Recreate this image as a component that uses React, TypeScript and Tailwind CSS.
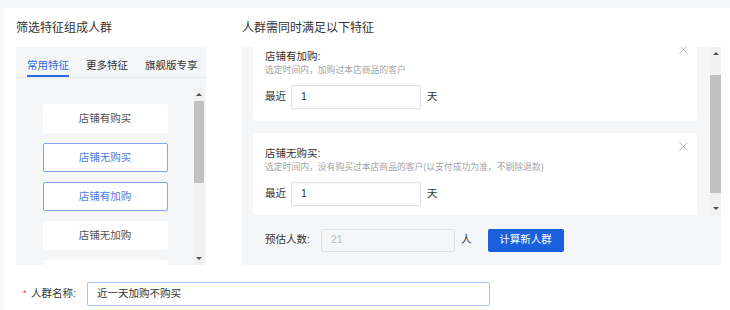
import React from 'react';

const font = { fontFamily: '"Liberation Sans", "Noto Sans CJK SC", sans-serif' };

// last one is only peeking in at the bottom of the list
const features = [
  { label: '店铺有购买', active: false },
  { label: '店铺无购买', active: true },
  { label: '店铺有加购', active: true },
  { label: '店铺无加购', active: false },
  { label: '', active: false },
];

const selected = [
  { title: '店铺有加购:', desc: '选定时间内，加购过本店商品的客户' },
  { title: '店铺无购买:', desc: '选定时间内，没有购买过本店商品的客户(以支付成功为准，不剔除退款)' },
];

// fake classic scrollbar, drawn in flow next to the list
const ScrollBar = ({ thumbTop, thumbHeight, width }: { thumbTop: string; thumbHeight: string; width: string }) => (
  <div className={`${width} h-full bg-[#f1f1f1] flex flex-col`}>
    <div className="h-[13px] flex items-center justify-center">
      <div className="w-0 h-0 border-l-[3px] border-r-[3px] border-b-[3px] border-l-transparent border-r-transparent border-b-[#505050]" />
    </div>
    <div className="flex-1 flex flex-col">
      <div className={thumbTop} />
      <div className={`${thumbHeight} bg-[#c1c1c1]`} />
    </div>
    <div className="h-[13px] flex items-center justify-center">
      <div className="w-0 h-0 border-l-[3px] border-r-[3px] border-t-[3px] border-l-transparent border-r-transparent border-t-[#505050]" />
    </div>
  </div>
);

const CloseIcon = () => (
  <svg width="9" height="9" viewBox="0 0 9 9" className="absolute top-[9px] right-[9px]">
    <path d="M0.5 0.5L8.5 8.5M8.5 0.5L0.5 8.5" stroke="#bdbdbd" strokeWidth="1" />
  </svg>
);

const App = () => {
  return <div className="w-[730px] h-[310px] overflow-hidden bg-[#f7f8fa] pt-2 pl-[5px]" style={font}>
      <div className="bg-white h-full pl-[11px] pt-3">
        <div className="flex">
          {/* left: feature picker */}
          <div className="w-[190px]">
            <h2 className="text-[12px] leading-4 text-[#333]">筛选特征组成人群</h2>
            <div className="mt-[11px] h-[218px] bg-[#f5f6f8] flex flex-col">
              <div className="h-[31px] border-b border-[#e6e8eb] flex pl-[11px] gap-[17px] text-[10.5px]">
                <div className="h-[30px] pt-[11px] leading-[14px] border-b-2 border-[#2b6ae3] text-[#2b6ae3]">常用特征</div>
                <div className="h-[30px] pt-[11px] leading-[14px] text-[#333]">更多特征</div>
                <div className="h-[30px] pt-[11px] leading-[14px] text-[#333]">旗舰版专享</div>
              </div>
              <div className="flex-1 pt-[10px] pr-[2px] flex min-h-0">
                <div className="flex-1 overflow-hidden pt-[16px] flex flex-col items-center gap-[10px]">
                  {features.map((f, i) => <div key={i} className={`w-[125px] h-[29px] shrink-0 bg-white rounded-[2px] flex items-center justify-center text-[10.5px] border ${f.active ? 'border-[#7ea4ef] text-[#4a7de6]' : 'border-white text-[#555]'}`}>
                        {f.label}
                      </div>)}
                </div>
                <ScrollBar width="w-[10px]" thumbTop="h-0" thumbHeight="h-[82px]" />
              </div>
            </div>
          </div>

          {/* right: selected features */}
          <div className="ml-[36px] w-[479px]">
            <h2 className="text-[12px] leading-4 text-[#333]">人群需同时满足以下特征</h2>
            <div className="mt-[11px] h-[218px] bg-[#f5f6f8] flex flex-col">
              <div className="h-[168px] flex">
                <div className="flex-1 overflow-hidden pl-[11px] pr-[13px]">
                  <div className="-mt-[11px] flex flex-col gap-[12px]">
                    {selected.map(s => <div key={s.title} className="relative h-[85px] shrink-0 bg-white rounded-[2px] pl-3 pt-[13px]">
                          <CloseIcon />
                          <div className="text-[10.5px] leading-[14px] text-[#333]">{s.title}</div>
                          <div className="mt-px text-[8.8px] leading-3 text-[#a3a3a3]">{s.desc}</div>
                          <div className="mt-[9px] flex items-center text-[10.5px] text-[#333]">
                            <span className="w-[26px]">最近</span>
                            <div className="w-[130px] h-[24px] border border-[#dcdfe6] rounded-[2px] flex items-center pl-[9px]">1</div>
                            <span className="ml-[6px]">天</span>
                          </div>
                        </div>)}
                  </div>
                </div>
                <ScrollBar width="w-[11px]" thumbTop="h-[15px]" thumbHeight="h-[118px]" />
              </div>
              <div className="h-[50px] flex items-center pl-[23px] text-[10.5px] text-[#333]">
                <span className="w-[56px]">预估人数:</span>
                <div className="w-[134px] h-[23px] border border-[#dcdfe6] bg-[#f5f6f8] rounded-[2px] flex items-center pl-[9px] text-[#bbb]">21</div>
                <span className="ml-[6px]">人</span>
                <button className="ml-[16px] w-[76px] h-[23px] bg-[#1a5fdb] text-white rounded-[2px] text-[10.5px]">计算新人群</button>
              </div>
            </div>
          </div>
        </div>

        {/* crowd name */}
        <div className="mt-[17px] flex items-center pl-[7px] h-[24px] text-[10.5px] text-[#333]">
          <span className="text-[#e4393c] w-[8px] text-[9px]">*</span>
          <span className="w-[56px]">人群名称:</span>
          <div className="w-[403px] h-[24px] border border-[#a9c1f2] rounded-[2px] flex items-center pl-[9px] text-[#333]">近一天加购不购买</div>
        </div>
      </div>
    </div>;
};

export default App;
